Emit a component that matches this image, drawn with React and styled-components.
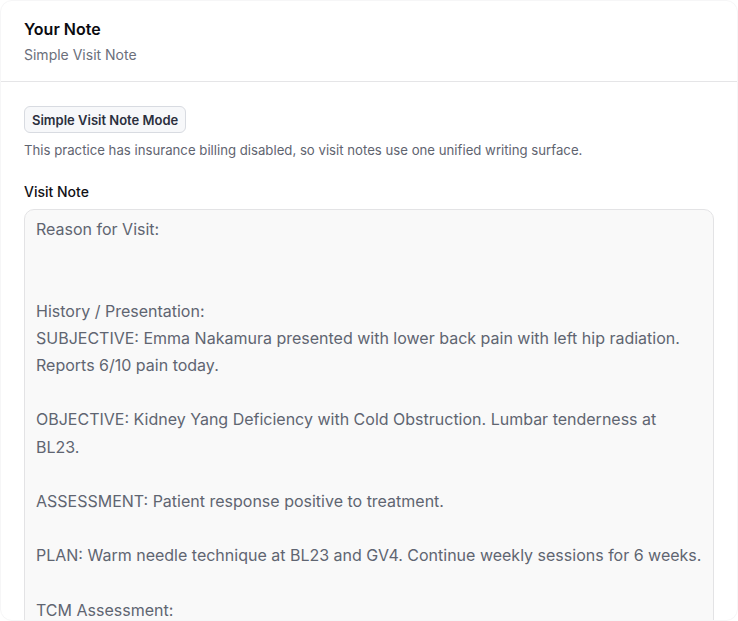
import React from 'react';
import styled, { createGlobalStyle } from 'styled-components';

const GlobalStyle = createGlobalStyle`
  html, body {
    margin: 0;
    padding: 0;
    background: #ffffff;
    font-family: Inter, "Noto Sans", sans-serif;
    -webkit-font-smoothing: antialiased;
  }
`;

const noteText = `Reason for Visit:


History / Presentation:
SUBJECTIVE: Emma Nakamura presented with lower back pain with left hip radiation. Reports 6/10 pain today.

OBJECTIVE: Kidney Yang Deficiency with Cold Obstruction. Lumbar tenderness at BL23.

ASSESSMENT: Patient response positive to treatment.

PLAN: Warm needle technique at BL23 and GV4. Continue weekly sessions for 6 weeks.

TCM Assessment:
`;

const App = () => {
  return (
    <>
      <GlobalStyle />
      <Card>
        <Header>
          <Title>Your Note</Title>
          <Subtitle>Simple Visit Note</Subtitle>
        </Header>
        <Body>
          <ModeBadge>Simple Visit Note Mode</ModeBadge>
          <Hint>
            This practice has insurance billing disabled, so visit notes use one unified writing surface.
          </Hint>
          <Label htmlFor="visit-note">Visit Note</Label>
          <NoteArea id="visit-note" readOnly value={noteText} />
        </Body>
      </Card>
    </>
  );
};

const Card = styled.div`
  box-sizing: border-box;
  height: 621px;
  overflow: hidden;
  border: 1px solid #f6f6f7;
  border-radius: 12px;
  background: #ffffff;
`;

const Header = styled.div`
  padding: 18px 23px 16px;
  border-bottom: 1px solid #e5e5e7;
`;

const Title = styled.h2`
  margin: 0;
  font-size: 16px;
  line-height: 20px;
  font-weight: 600;
  color: #0b0b10;
`;

const Subtitle = styled.p`
  margin: 6px 0 0;
  font-size: 14px;
  line-height: 20px;
  color: #6b6f7b;
`;

const Body = styled.div`
  display: flex;
  flex-direction: column;
  align-items: flex-start;
  padding: 24px 23px 0;
`;

const ModeBadge = styled.span`
  box-sizing: border-box;
  height: 27px;
  padding: 0 7px;
  display: inline-flex;
  align-items: center;
  border: 1px solid #d8dbe1;
  border-radius: 6px;
  background: #f7f8fa;
  font-size: 13px;
  font-weight: 600;
  color: #2b2f3d;
`;

const Hint = styled.p`
  margin: 8px 0 0;
  font-size: 13.2px;
  line-height: 18px;
  color: #5f6470;
`;

const Label = styled.label`
  margin-top: 24px;
  font-size: 14px;
  line-height: 18px;
  font-weight: 500;
  color: #111116;
`;

const NoteArea = styled.textarea`
  box-sizing: border-box;
  width: 100%;
  height: 560px;
  margin-top: 8px;
  padding: 6px 11px 5px;
  border: 1px solid #e3e3e5;
  border-radius: 10px;
  background: #f9f9f9;
  font-family: Inter, "Noto Sans", sans-serif;
  font-size: 16px;
  line-height: 27.2px;
  color: #5f6571;
  resize: none;
  outline: none;
  overflow: hidden;
`;

export default App;
